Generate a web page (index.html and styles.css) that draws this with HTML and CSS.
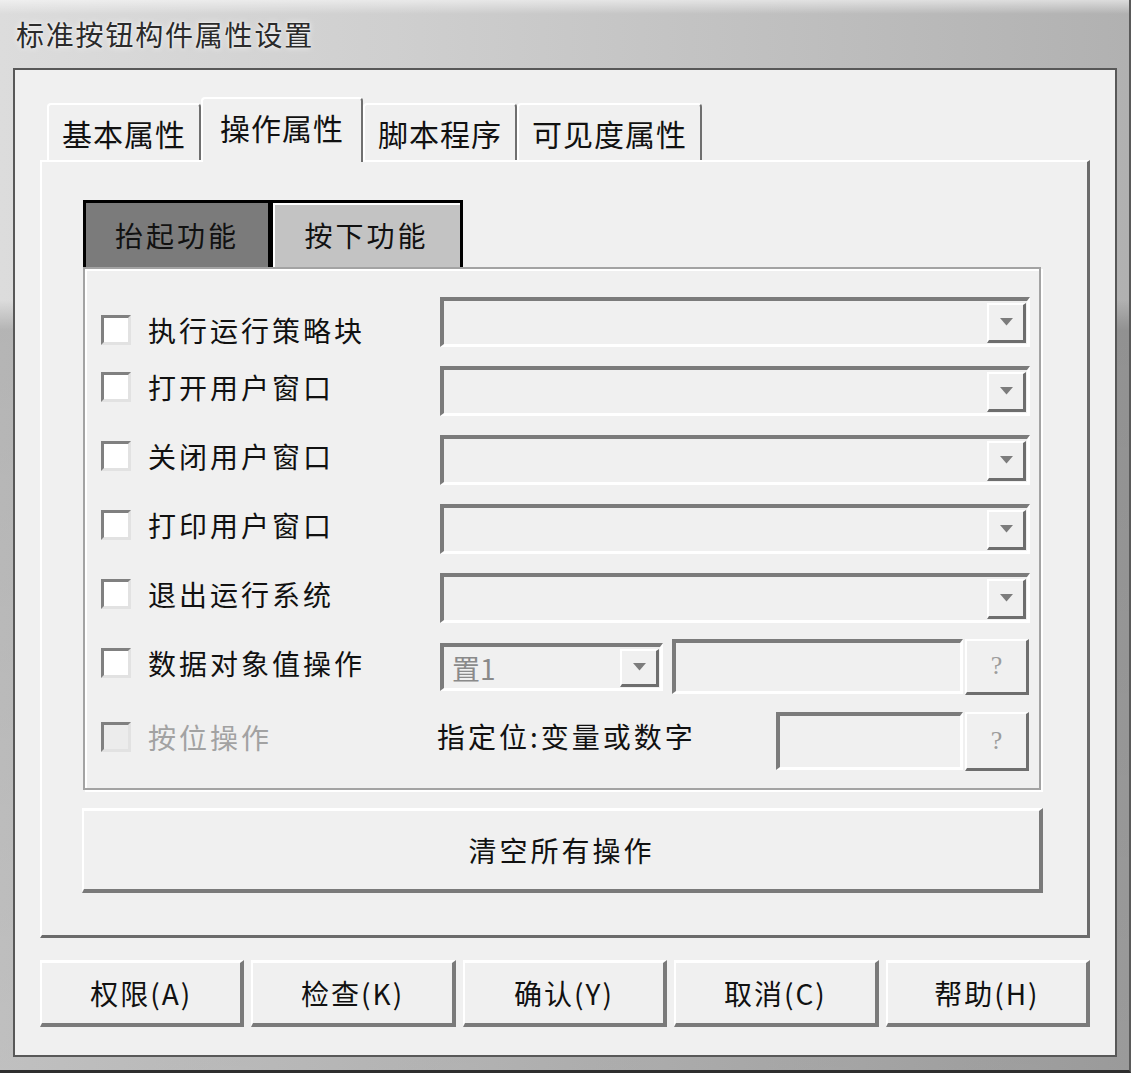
FILE: index.html
```html
<!DOCTYPE html>
<html lang="zh-CN">
<head>
<meta charset="utf-8">
<title>标准按钮构件属性设置</title>
<link rel="stylesheet" href="styles.css">
</head>
<body>
<div class="window">
  <div class="titlebar"><span class="title">标准按钮构件属性设置</span></div>
  <div class="client">
    <div class="tabs">
      <div class="tab">基本属性</div>
      <div class="tab active">操作属性</div>
      <div class="tab">脚本程序</div>
      <div class="tab">可见度属性</div>
    </div>
    <div class="panel">
      <div class="subtabs">
        <div class="subtab up">抬起功能</div>
        <div class="subtab down">按下功能</div>
      </div>
      <div class="group">
        <div class="row first">
          <span class="check"></span><span class="label">执行运行策略块</span>
          <div class="combo wide"><span class="drop"><svg class="arrow" width="13" height="8" viewBox="0 0 13 8"><polygon points="0,0 13,0 6.5,7.5" fill="#7c7c7c"/></svg></span></div>
        </div>
        <div class="row">
          <span class="check"></span><span class="label">打开用户窗口</span>
          <div class="combo wide"><span class="drop"><svg class="arrow" width="13" height="8" viewBox="0 0 13 8"><polygon points="0,0 13,0 6.5,7.5" fill="#7c7c7c"/></svg></span></div>
        </div>
        <div class="row">
          <span class="check"></span><span class="label">关闭用户窗口</span>
          <div class="combo wide"><span class="drop"><svg class="arrow" width="13" height="8" viewBox="0 0 13 8"><polygon points="0,0 13,0 6.5,7.5" fill="#7c7c7c"/></svg></span></div>
        </div>
        <div class="row">
          <span class="check"></span><span class="label">打印用户窗口</span>
          <div class="combo wide"><span class="drop"><svg class="arrow" width="13" height="8" viewBox="0 0 13 8"><polygon points="0,0 13,0 6.5,7.5" fill="#7c7c7c"/></svg></span></div>
        </div>
        <div class="row">
          <span class="check"></span><span class="label">退出运行系统</span>
          <div class="combo wide"><span class="drop"><svg class="arrow" width="13" height="8" viewBox="0 0 13 8"><polygon points="0,0 13,0 6.5,7.5" fill="#7c7c7c"/></svg></span></div>
        </div>
        <div class="row">
          <span class="check"></span><span class="label">数据对象值操作</span>
          <div class="combo small"><span class="combo-text">置1</span><span class="drop"><svg class="arrow" width="13" height="8" viewBox="0 0 13 8"><polygon points="0,0 13,0 6.5,7.5" fill="#7c7c7c"/></svg></span></div>
          <div class="field data"></div>
          <div class="qbtn q6">?</div>
        </div>
        <div class="row last">
          <span class="check disabled"></span><span class="label disabled">按位操作</span>
          <span class="hint">指定位:变量或数字</span>
          <div class="field bit"></div>
          <div class="qbtn q7">?</div>
        </div>
      </div>
      <div class="btn clear">清空所有操作</div>
    </div>
    <div class="buttons">
      <div class="btn">权限(A)</div>
      <div class="btn">检查(K)</div>
      <div class="btn">确认(Y)</div>
      <div class="btn">取消(C)</div>
      <div class="btn">帮助(H)</div>
    </div>
  </div>
</div>
</body>
</html>
```

FILE: styles.css
```css
* { box-sizing: border-box; }
html, body { margin: 0; padding: 0; }
body {
  background: #ffffff;
  font-family: "Noto Sans CJK SC", "Noto Sans", sans-serif;
  color: #111111;
}

.window {
  width: 1131px;
  height: 1073px;
  display: flex;
  flex-direction: column;
  padding: 0 12px 13px 13px;
  border-right: 2px solid #5a5a5a;
  border-bottom: 3px solid #2e2e2e;
  background:
    linear-gradient(to bottom, rgba(255,255,255,0.55) 0, rgba(255,255,255,0) 14px),
    linear-gradient(to bottom, rgba(0,0,0,0) 0, rgba(0,0,0,0) 300px, rgba(0,0,0,0.18) 330px, rgba(0,0,0,0.13) 100%),
    linear-gradient(to right, #dcdcdc 0%, #cfcfcf 35%, #bfbfbf 70%, #b1b1b1 100%);
}

.titlebar {
  flex: none;
  height: 68px;
  display: flex;
  align-items: center;
  padding-left: 3px;
}
.title {
  font-size: 28px;
  letter-spacing: 1.8px;
  line-height: 1;
  color: #2b2b2b;
  text-shadow: 0 0 6px rgba(255,255,255,0.9), 0 0 2px rgba(255,255,255,0.8);
}

.client {
  flex: 1;
  border: 2px solid #585858;
  background: #f0f0f0;
  padding: 27px 25px 0 25px;
  display: flex;
  flex-direction: column;
}

/* main tabs */
.tabs {
  flex: none;
  height: 63px;
  display: flex;
  align-items: flex-start;
  padding-left: 7px;
}
.tab {
  margin-top: 6px;
  height: 57px;
  padding: 0 13px;
  display: flex;
  align-items: center;
  font-size: 30px;
  letter-spacing: 1px;
  white-space: nowrap;
  background: #f0f0f0;
  border-top: 2px solid #ffffff;
  border-left: 2px solid #ffffff;
  border-right: 2px solid #6f6f6f;
  border-radius: 4px 4px 0 0;
}
.tab.active {
  position: relative;
  z-index: 1;
  margin-top: 0;
  height: 65px;
  padding: 0 17px 7px 17px;
}

/* tab page */
.panel {
  flex: none;
  height: 778px;
  border-top: 2px solid #ffffff;
  border-left: 2px solid #ffffff;
  border-right: 3px solid #6b6b6b;
  border-bottom: 3px solid #6b6b6b;
  padding: 38px 46px 0 41px;
  display: flex;
  flex-direction: column;
}

.subtabs {
  flex: none;
  display: flex;
  height: 67px;
}
.subtab {
  height: 67px;
  display: flex;
  align-items: center;
  justify-content: center;
  font-size: 28px;
  letter-spacing: 3px;
  border: 3px solid #000000;
  border-bottom: 0;
}
.subtab.up {
  width: 188px;
  background: #7b7b7b;
}
.subtab.down {
  width: 192px;
  border-left-width: 2px;
  background: #c3c3c3;
  box-shadow: inset 2px 2px 0 #ffffff;
}

/* group of actions */
.group {
  flex: none;
  height: 523px;
  border: 2px solid #a3a3a3;
  box-shadow: inset 2px 2px 0 #ffffff, 2px 2px 0 #ffffff;
  padding: 18px 9px 7px 16px;
}
.row {
  height: 69px;
  display: flex;
  align-items: center;
}
.row.last { height: 80px; }

.check {
  flex: none;
  width: 30px;
  height: 30px;
  margin-bottom: 8px;
  border-style: solid;
  border-width: 3px;
  border-color: #808080 #e2e2e2 #e2e2e2 #808080;
  background: #ffffff;
}
.check.disabled { background: #ececec; }

.label {
  flex: none;
  width: 292px;
  margin-left: 17px;
  margin-bottom: 8px;
  font-size: 28px;
  letter-spacing: 3px;
  white-space: nowrap;
  color: #111111;
}
.label.disabled { color: #a2a2a2; }
.row.first .check,
.row.first .label { margin-bottom: 0; margin-top: 16px; }

.hint {
  font-size: 28px;
  letter-spacing: 3px;
  white-space: nowrap;
  margin-left: -3px;
  margin-bottom: 10px;
  color: #111111;
}

.combo {
  flex: none;
  display: flex;
  justify-content: flex-end;
  align-items: stretch;
  height: 50px;
  border-style: solid;
  border-width: 4px 3px 3px 4px;
  border-color: #7b7b7b #ffffff #ffffff #7b7b7b;
  background: #f0f0f0;
  padding: 2px 1px 1px 2px;
}
.combo.wide { width: 590px; }
.combo.small { width: 223px; height: 48px; }
.combo-text {
  flex: 1;
  display: flex;
  align-items: center;
  padding-left: 6px;
  font-size: 28px;
  color: #8a8a8a;
}
.drop {
  flex: none;
  width: 39px;
  border-style: solid;
  border-width: 2px 3px 3px 2px;
  border-color: #ffffff #6e6e6e #6e6e6e #ffffff;
  background: #f0f0f0;
  display: flex;
  align-items: center;
  justify-content: center;
}
.arrow { display: block; }

.field {
  flex: none;
  border-style: solid;
  border-width: 4px 3px 3px 4px;
  border-color: #7b7b7b #ffffff #ffffff #7b7b7b;
  background: #f0f0f0;
}
.field.data { width: 291px; height: 55px; margin-left: 9px; }
.field.bit { width: 187px; height: 58px; margin-left: auto; }

.qbtn {
  flex: none;
  width: 64px;
  margin-left: 2px;
  margin-right: 1px;
  border-style: solid;
  border-width: 2px 3px 3px 2px;
  border-color: #ffffff #6e6e6e #6e6e6e #ffffff;
  background: #f0f0f0;
  display: flex;
  align-items: center;
  justify-content: center;
  font-family: "Liberation Serif", serif;
  font-size: 26px;
  color: #9c9c9c;
}
.qbtn.q6 { height: 56px; }
.qbtn.q7 { height: 59px; }

/* push buttons */
.btn {
  border-style: solid;
  border-width: 3px 4px 4px 2px;
  border-color: #ffffff #7a7a7a #7a7a7a #ffffff;
  background: #f0f0f0;
  display: flex;
  align-items: center;
  justify-content: center;
  font-size: 28px;
  letter-spacing: 2px;
  white-space: nowrap;
  color: #111111;
}
.btn.clear {
  flex: none;
  margin-top: 18px;
  margin-left: -1px;
  width: 961px;
  height: 85px;
  letter-spacing: 3px;
}

.buttons {
  flex: none;
  margin-top: 22px;
  height: 67px;
  display: flex;
  gap: 7px;
}
.buttons .btn { flex: 1; }
```
